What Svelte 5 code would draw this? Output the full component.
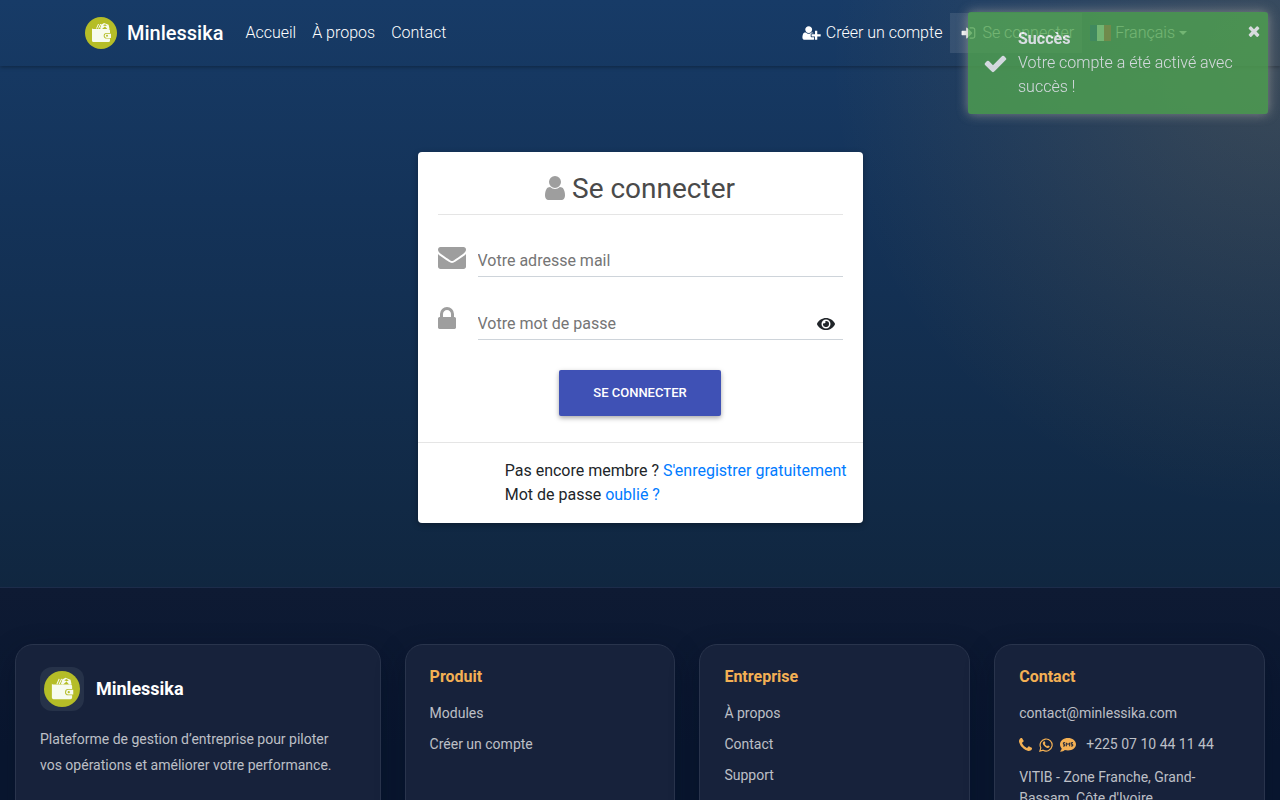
<script lang="ts">
  let email = $state('')
  let password = $state('')
  let showPassword = $state(false)
  let toastVisible = $state(true)

  const mainLinks = ['Accueil', 'À propos', 'Contact']
  const footerColumns = [
    { title: 'Produit', links: ['Modules', 'Créer un compte'] },
    { title: 'Entreprise', links: ['À propos', 'Contact', 'Support'] },
  ]

  const submit = (event: SubmitEvent) => event.preventDefault()
</script>

{#snippet logo()}
  <svg class="logo" viewBox="0 0 32 32" aria-hidden="true">
    <circle cx="16" cy="16" r="16" fill="#b5bd27" />
    <g fill="none" stroke="#f7fbef" stroke-width="1">
      <path d="M11.5 11.5l2-4.500M13.500 11.500l2.200-4.500M15.500 11.500l1.700-4.500" />
    </g>
    <path fill="#f7fbef" d="M16.500 7.500l2.500-1.500 4.600 1.700.900 4.300h-2.200l-2.300-2.600-3 2.600h-1.300z" />
    <path fill="#b5bd27" d="M18 8.200l2-1 2 1.200-2 .6z" />
    <path fill="#f7fbef" d="M7 11q0 1 1.300 1h15.200q1.500 0 1.500 1.500v2.500h-3.500a2.700 2.700 0 0 0 0 5.600h3.500v1.900q0 1.500-1.500 1.500h-15q-1.500 0-1.500-1.500z" />
    <path fill="#f7fbef" d="M21.700 16.700h4.300v4.200h-4.300a2.100 2.100 0 0 1 0-4.200z" />
    <circle cx="22" cy="18.800" r="1" fill="#b5bd27" />
  </svg>
{/snippet}

<div class="page">
  <nav class="navbar">
    <div class="navbar-inner">
      <a class="brand" href="#accueil">{@render logo()}Minlessika</a>
      <div class="nav-links">
        {#each mainLinks as link}
          <a class="nav-link" href="#{link}">{link}</a>
        {/each}
      </div>
      <div class="nav-links nav-account">
        <a class="nav-link" href="#inscription">
          <svg class="nav-icon" viewBox="0 0 2148 1792" aria-hidden="true">
            <path d="M704 896q-159 0-271.5-112.5T320 512t112.5-271.5T704 128t271.500 112.500T1088 512 975.500 783.500 704 896zM1664 1024h352q13 0 22.500 9.500t9.500 22.500v192q0 13-9.500 22.500t-22.500 9.500h-352v352q0 13-9.500 22.500t-22.500 9.500h-192q-13 0-22.500-9.500t-9.500-22.500v-352h-352q-13 0-22.500-9.500t-9.500-22.500v-192q0-13 9.500-22.500t22.500-9.500h352v-352q0-13 9.500-22.500t22.500-9.500h192q13 0 22.500 9.500t9.500 22.500zM928 1248q0 52 38 90t90 38h256v238q-68 50-171 50H267q-121 0-194-69T0 1405q0-53 3.500-103.500t14-109T44 1084t43-97.500 62-81 85.500-53.500T346 832q19 0 39 17 79 61 154.500 91.500T704 971t164.500-30.500T1023 849q20-17 39-17 132 0 217 96h-223q-52 0-90 38t-38 90z" />
          </svg>
          Créer un compte
        </a>
        <a class="nav-link active" href="#connexion">
          <svg class="nav-icon" viewBox="-228 0 2148 1792" aria-hidden="true">
            <path d="M1312 896q0 26-19 45l-544 544q-19 19-45 19t-45-19-19-45v-288h-448q-26 0-45-19t-19-45v-384q0-26 19-45t45-19h448v-288q0-26 19-45t45-19 45 19l544 544q19 19 19 45zm352-352v704q0 119-84.5 203.5t-203.5 84.5h-320q-32 0-32-32-6-96 32-96h320q66 0 113-47t47-113v-704q0-66-47-113t-113-47h-312q-40 0-40-32-6-96 32-96h320q119 0 203.500 84.500t84.500 203.500z" />
          </svg>
          Se connecter
        </a>
        <button class="nav-link" type="button">
          <svg class="flag" viewBox="0 0 21 16" aria-hidden="true">
            <path fill="#002395" d="M0 0h7v16H0z" />
            <path fill="#fff" d="M7 0h7v16H7z" />
            <path fill="#ed2939" d="M14 0h7v16h-7z" />
          </svg>
          Français
          <span class="caret"></span>
        </button>
      </div>
    </div>
  </nav>

  <main class="content">
    <section class="card">
      <form class="card-body" onsubmit={submit}>
        <h1 class="card-title">
          <svg class="title-icon" viewBox="256 128 1280 1664" aria-hidden="true">
            <path d="M1536 1399q0 109-62.500 187t-150.500 78h-854q-88 0-150.500-78t-62.500-187q0-85 8.500-160.500t31.500-152 58.500-131 94-89 134.500-34.500q131 128 313 128t313-128q76 0 134.500 34.500t94 89 58.500 131 31.500 152 8.500 160.500zm-256-887q0 159-112.500 271.500t-271.500 112.500-271.500-112.500-112.500-271.500 112.500-271.500 271.500-112.500 271.500 112.500 112.500 271.500z" />
          </svg>
          Se connecter
        </h1>
        <div class="field">
          <label for="email" aria-label="Votre adresse mail">
            <svg width="28" height="28" viewBox="0 0 1792 1792" aria-hidden="true">
              <path d="M1792 710v794q0 66-47 113t-113 47h-1472q-66 0-113-47t-47-113v-794q44 49 101 87 362 246 497 345 57 42 92.500 65.500t94.500 48 110 24.500h2q51 0 110-24.500t94.500-48 92.500-65.500q170-123 498-345 57-39 100-87zm0-294q0 79-49 151t-122 123q-376 261-468 325-10 7-42.500 31t-54 38.500-52 32.500-57.500 27-50 9h-2q-23 0-50-9t-57.500-27-52-32.500-54-38.500-42.500-31q-91-64-262-182.500t-205-142.500q-62-42-117-115.500t-55-136.500q0-78 41.500-130t118.500-52h1472q65 0 112.500 47t47.500 113z" />
            </svg>
          </label>
          <input id="email" type="email" placeholder="Votre adresse mail" bind:value={email} />
        </div>
        <div class="field">
          <label for="password" aria-label="Votre mot de passe">
            <svg width="28" height="28" viewBox="320 64 1792 1792" aria-hidden="true">
              <path d="M640 768h512v-192q0-106-75-181t-181-75-181 75-75 181v192zm832 96v576q0 40-28 68t-68 28h-960q-40 0-68-28t-28-68v-576q0-40 28-68t68-28h32v-192q0-184 132-316t316-132 316 132 132 316v192h32q40 0 68 28t28 68z" />
            </svg>
          </label>
          <input
            id="password"
            type={showPassword ? 'text' : 'password'}
            placeholder="Votre mot de passe"
            bind:value={password}
          />
          <button
            class="reveal"
            type="button"
            aria-label="Afficher le mot de passe"
            onclick={() => (showPassword = !showPassword)}
          >
            <svg width="18" height="16" viewBox="0 0 576 512" aria-hidden="true">
              <path d="M572.520 241.400C518.290 135.590 410.930 64 288 64S57.680 135.640 3.480 241.410a32.350 32.350 0 0 0 0 29.190C57.710 376.410 165.070 448 288 448s230.320-71.640 284.520-177.410a32.350 32.350 0 0 0 0-29.190zM288 400a144 144 0 1 1 144-144 143.930 143.930 0 0 1-144 144zm0-240a95.310 95.310 0 0 0-25.310 3.790 47.850 47.850 0 0 1-66.900 66.900A95.780 95.780 0 1 0 288 160z" />
            </svg>
          </button>
        </div>
        <button class="submit" type="submit">Se connecter</button>
      </form>
      <div class="card-footer">
        <div>
          <p>Pas encore membre ? <a href="#inscription">S'enregistrer gratuitement</a></p>
          <p>Mot de passe <a href="#oubli">oublié ?</a></p>
        </div>
      </div>
    </section>
  </main>

  <footer class="footer">
    <div class="footer-grid">
      <section class="footer-card">
        <div class="footer-brand">
          <span class="logo-tile">{@render logo()}</span>
          Minlessika
        </div>
        <p class="pitch">
          Plateforme de gestion d’entreprise pour piloter vos opérations et améliorer votre performance.
        </p>
      </section>
      {#each footerColumns as column}
        <section class="footer-card">
          <h2>{column.title}</h2>
          <ul>
            {#each column.links as link}
              <li><a href="#{link}">{link}</a></li>
            {/each}
          </ul>
        </section>
      {/each}
      <section class="footer-card">
        <h2>Contact</h2>
        <ul>
          <li><a href="mailto:contact@minlessika.com">contact@minlessika.com</a></li>
          <li class="phone">
            <svg width="13" height="13" viewBox="192 256 1408 1408" aria-hidden="true">
              <path d="M1600 1368q0 27-10 70.500t-21 68.500q-21 50-122 106-94 51-186 51-27 0-53-3.500t-57.500-12.500-47-14.500-55.500-20.500-49-18q-98-35-175-83-127-79-264-216t-216-264q-48-77-83-175-3-9-18-49t-20.500-55.500-14.500-47-12.500-57.500-3.500-53q0-92 51-186 56-101 106-122 25-11 68.500-21t70.500-10q14 0 21 3 18 6 53 76 11 19 30 54t35 63.500 31 53.500q3 4 17.500 25t21.500 35.500 7 28.500q0 20-28.500 50t-62 55-62 53-28.500 46q0 9 5 22.500t8.500 20.500 14 24 11.500 19q76 137 174 235t235 174q2 1 19 11.500t24 14 20.500 8.500 22.500 5q18 0 46-28.500t53-62 55-62 50-28.500q14 0 28.500 7t35.500 21.500 25 17.500q25 15 53.500 31t63.500 35 54 30q70 35 76 53 3 7 3 21z" />
            </svg>
            <svg width="14" height="14" viewBox="0 0 14 14" aria-hidden="true">
              <path fill="none" stroke="currentColor" stroke-width="1.200" d="M.9 13.100l.9-3.300a6 6 0 1 1 2.300 2.400z" />
              <path d="M4.800 3.500c.5-.3.900-.2 1.100.3l.5 1.200c.1.400-.4.800-.6 1.100.5 1 1.300 1.700 2.300 2.100.3-.3.600-.9 1-.8l1.300.6c.4.200.2 1-.1 1.300-.6.700-1.600.8-2.600.4C5.800 9 4.500 7.600 3.900 6.100c-.3-1 .1-2.100.9-2.600z" />
            </svg>
            <svg width="16" height="14" viewBox="0 0 16 14" aria-hidden="true">
              <path d="M8 0c4.400 0 8 2.700 8 6.300s-3.600 6.200-8 6.200c-1.100 0-2.200-.2-3.200-.5-1 .9-2.500 1.700-4.300 1.700-.3 0-.4-.4-.2-.6.700-.7 1.200-1.600 1.400-2.600C.6 9.400 0 7.900 0 6.300 0 2.700 3.600 0 8 0z" />
              <path fill="none" stroke="#17223b" d="M5 4.700H3.400v1.600h1.300V8H3M6.300 8.300V4.800L8 6.600l1.700-1.800v3.500M13 4.700h-1.700v1.600h1.400V8H11" />
            </svg>
            <a href="tel:+2250710441144">+225 07 10 44 11 44</a>
          </li>
          <li>VITIB - Zone Franche, Grand-Bassam, Côte d'Ivoire</li>
        </ul>
      </section>
    </div>
  </footer>
</div>

{#if toastVisible}
  <div class="toast" role="status">
    <svg class="toast-check" width="25" height="25" viewBox="0 0 1792 1792" aria-hidden="true">
      <path d="M1671 566q0 40-28 68l-724 724-136 136q-28 28-68 28t-68-28l-136-136-362-362q-28-28-28-68t28-68l136-136q28-28 68-28t68 28l294 295 656-657q28-28 68-28t68 28l136 136q28 28 28 68z" />
    </svg>
    <div class="toast-text">
      <strong>Succès</strong>
      <p>Votre compte a été activé avec succès !</p>
    </div>
    <button class="toast-close" type="button" aria-label="Fermer" onclick={() => (toastVisible = false)}>
      <svg width="16" height="16" viewBox="0 0 1792 1792" aria-hidden="true">
        <path d="M1490 1322q0 40-28 68l-136 136q-28 28-68 28t-68-28l-294-294-294 294q-28 28-68 28t-68-28l-136-136q-28-28-28-68t28-68l294-294-294-294q-28-28-28-68t28-68l136-136q28-28 68-28t68 28l294 294 294-294q28-28 68-28t68 28l136 136q28 28 28 68t-28 68l-294 294 294 294q28 28 28 68z" />
      </svg>
    </button>
  </div>
{/if}

<style>
  :global(body) {
    margin: 0;
    background: #0b1730;
  }
  .page,
  .toast {
    font-family: Roboto, sans-serif;
    font-size: 16px;
    font-weight: 300;
    line-height: 24px;
  }
  .page {
    background:
      radial-gradient(circle 450px at 100% 60px, rgba(243, 166, 50, 0.17), transparent),
      linear-gradient(180deg, #173b67 0, #143359 200px, #10263f 600px);
  }
  .page *,
  .toast * {
    box-sizing: border-box;
  }
  svg {
    display: block;
    flex: none;
    fill: currentColor;
  }
  a {
    color: inherit;
    text-decoration: none;
  }
  button {
    font: inherit;
    color: inherit;
    border: 0;
    padding: 0;
    background: none;
    cursor: pointer;
  }
  p,
  h1,
  h2,
  ul {
    margin: 0;
    padding: 0;
  }
  ul {
    list-style: none;
  }

  .navbar {
    color: #fff;
    box-shadow: 0 1px 4px rgba(0, 0, 0, 0.35);
  }
  .navbar-inner {
    display: flex;
    align-items: center;
    max-width: 1140px;
    margin: 0 auto;
    padding: 13px 15px;
  }
  .brand {
    display: flex;
    align-items: center;
    gap: 10px;
    margin-right: 14px;
    font-size: 20px;
    font-weight: 500;
  }
  .logo {
    width: 32px;
    height: 32px;
  }
  .nav-links {
    display: flex;
  }
  .nav-account {
    margin-left: auto;
  }
  .nav-link {
    display: flex;
    align-items: center;
    gap: 4px;
    padding: 8px;
    white-space: nowrap;
  }
  .nav-link.active {
    background: rgba(255, 255, 255, 0.1);
  }
  .nav-icon {
    width: 20px;
    height: 16px;
  }
  .flag {
    width: 21px;
    height: 16px;
  }
  .caret {
    border: 4px solid transparent;
    border-top-color: currentColor;
    border-bottom: 0;
  }

  .content {
    display: flex;
    justify-content: center;
    padding: 86px 15px 64px;
  }
  .card {
    width: 100%;
    max-width: 445px;
    color: #212529;
    font-weight: 400;
    background: #fff;
    border-radius: 4px;
    box-shadow: 0 2px 6px rgba(0, 0, 0, 0.3);
  }
  .card-body {
    display: flex;
    flex-direction: column;
    padding: 20px 20px 26px;
  }
  .card-title {
    display: flex;
    align-items: center;
    justify-content: center;
    gap: 7px;
    padding-bottom: 8px;
    margin-bottom: 24px;
    color: #4a4a4a;
    font-size: 28px;
    font-weight: 400;
    line-height: 34px;
    border-bottom: 1px solid #e5e5e5;
  }
  .title-icon {
    width: 20px;
    height: 26px;
    color: #9e9e9e;
  }
  .field {
    display: flex;
    align-items: flex-start;
    margin-bottom: 25px;
    position: relative;
  }
  .field label {
    width: 40px;
    padding-top: 4px;
    color: #9e9e9e;
  }
  .field input {
    flex: 1;
    min-width: 0;
    height: 38px;
    padding: 6px 0 0;
    color: #495057;
    font: inherit;
    background: none;
    border: 0;
    border-bottom: 1px solid #ced4da;
    border-radius: 0;
    outline: 0;
  }
  .field input::placeholder {
    color: #757575;
    opacity: 1;
  }
  .reveal {
    position: absolute;
    right: 8px;
    bottom: 8px;
  }
  .submit {
    align-self: center;
    margin-top: 5px;
    padding: 11px 34px;
    color: #fff;
    font-size: 13px;
    font-weight: 500;
    text-transform: uppercase;
    background: #3f51b5;
    border-radius: 2px;
    box-shadow: 0 2px 5px rgba(0, 0, 0, 0.35);
  }
  .card-footer {
    display: flex;
    justify-content: flex-end;
    padding: 16px;
    border-top: 1px solid #e5e5e5;
  }
  .card-footer a {
    color: #007bff;
  }

  .footer {
    padding: 56px 15px;
    color: rgba(255, 255, 255, 0.72);
    font-size: 14px;
    font-weight: 400;
    background: linear-gradient(180deg, #0e1a33, #091730 160px);
    border-top: 1px solid #1d2c4a;
  }
  .footer-grid {
    display: grid;
    grid-template-columns: 135fr 100fr 100fr 100fr;
    gap: 24px;
  }
  .footer-card {
    padding: 22px 24px;
    background: #17223b;
    border: 1px solid #29344c;
    border-radius: 18px;
    box-shadow: 0 10px 30px rgba(0, 10, 30, 0.3);
  }
  .footer-brand {
    display: flex;
    align-items: center;
    gap: 12px;
    margin-bottom: 15px;
    color: #fff;
    font-size: 18px;
    font-weight: 700;
  }
  .logo-tile {
    padding: 4px;
    background: #263249;
    border-radius: 12px;
  }
  .logo-tile .logo {
    width: 36px;
    height: 36px;
  }
  .pitch {
    max-width: 300px;
    line-height: 26px;
  }
  .footer h2 {
    margin-bottom: 16px;
    color: #f3b054;
    font-size: 16px;
    font-weight: 700;
    line-height: 20px;
  }
  .footer li {
    margin-bottom: 10px;
    line-height: 21px;
  }
  .footer .phone {
    display: flex;
    align-items: center;
    gap: 7px;
    margin-bottom: 12px;
  }
  .phone svg {
    color: #f3b054;
  }
  .phone a {
    margin-left: 3px;
  }

  .toast {
    position: fixed;
    top: 12px;
    right: 12px;
    z-index: 10;
    display: flex;
    box-sizing: border-box;
    width: 300px;
    padding: 15px;
    color: #fff;
    background: #51a351;
    border-radius: 3px;
    box-shadow: 0 0 12px #999;
    opacity: 0.8;
  }
  .toast-check {
    align-self: center;
    margin-right: 10px;
  }
  .toast-text {
    flex: 1;
  }
  .toast-text strong {
    font-weight: 700;
  }
  .toast-close {
    position: absolute;
    top: 11px;
    right: 6px;
  }
</style>
